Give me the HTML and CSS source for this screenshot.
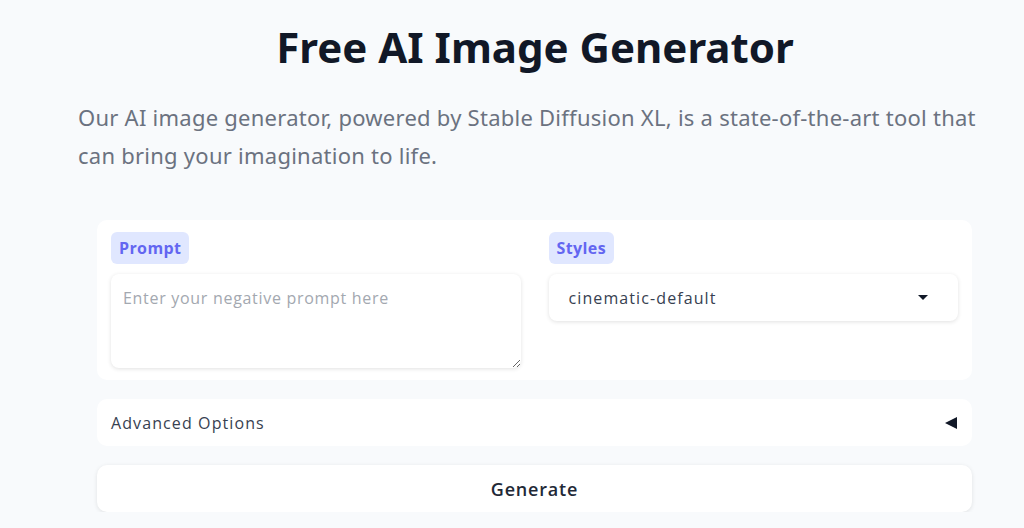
FILE: index.html
```html
<!DOCTYPE html>
<html lang="en">
<head>
  <meta charset="UTF-8" />
  <meta name="viewport" content="width=device-width, initial-scale=1.0"/>
  <title>Free AI Image Generator</title>
  <link rel="stylesheet" href="styles.css">
</head>
<body>
  <div class="container">
    <h1 class="title">Free AI Image Generator</h1>
    <p class="intro">Our AI image generator, powered by Stable Diffusion XL, is a state-of-the-art tool that can bring your imagination to life.</p>

    <div class="form-card">
      <div class="field">
        <span class="badge">Prompt</span>
        <textarea class="prompt-input" placeholder="Enter your negative prompt here"></textarea>
      </div>
      <div class="field">
        <span class="badge">Styles</span>
        <div class="select">
          <span>cinematic-default</span>
          <span class="caret-down"></span>
        </div>
      </div>
    </div>

    <div class="advanced">
      <span>Advanced Options</span>
      <span class="caret-left"></span>
    </div>

    <button class="generate">Generate</button>
  </div>
</body>
</html>
```

FILE: styles.css
```css
body {
  margin: 0;
  background: #f8fafc;
  font-family: "Noto Sans", "Open Sans", sans-serif;
  color: #111827;
}
.container {
  width: 914px;
  margin-left: 78px;
}
.title {
  margin: 0;
  padding-top: 18px;
  font-size: 42px;
  line-height: 58px;
  font-weight: 700;
  text-align: center;
  color: #111827;
}
.intro {
  margin: 22px 0 0;
  font-size: 22px;
  line-height: 38px;
  letter-spacing: 0.25px;
  color: #6b7280;
}
.form-card {
  margin: 46px 20px 0 19px;
  background: #fff;
  border-radius: 10px;
  padding: 12px 14px;
  display: grid;
  grid-template-columns: 1fr 1fr;
  gap: 28px;
  font-family: "Open Sans", sans-serif;
}
.field {
  display: flex;
  flex-direction: column;
  align-items: flex-start;
  gap: 10px;
}
.badge {
  background: #e0e7ff;
  color: #6366f1;
  font-weight: 700;
  font-size: 16px;
  line-height: 32px;
  padding: 0 8px;
  border-radius: 6px;
  letter-spacing: 0.4px;
}
.prompt-input {
  box-sizing: border-box;
  width: 100%;
  height: 94px;
  border: none;
  border-radius: 8px;
  box-shadow: 0 1px 4px rgba(0,0,0,0.12);
  padding: 13px 12px;
  font-family: "Open Sans", sans-serif;
  font-size: 16px;
  letter-spacing: 0.7px;
  outline: none;
  resize: vertical;
}
.prompt-input::placeholder {
  color: #a3a8b0;
}
.select {
  box-sizing: border-box;
  width: 100%;
  height: 47px;
  border-radius: 8px;
  box-shadow: 0 1px 4px rgba(0,0,0,0.12);
  padding: 0 30px 0 20px;
  display: flex;
  align-items: center;
  justify-content: space-between;
  font-size: 16px;
  color: #374151;
  letter-spacing: 1.1px;
}
.caret-down {
  width: 0;
  height: 0;
  border-left: 5px solid transparent;
  border-right: 5px solid transparent;
  border-top: 5px solid #111827;
}
.advanced {
  margin: 19px 20px 0 19px;
  height: 47px;
  background: #fff;
  border-radius: 10px;
  padding: 0 15px 0 14px;
  display: flex;
  align-items: center;
  justify-content: space-between;
  font-family: "Open Sans", sans-serif;
  font-size: 16px;
  color: #374151;
  letter-spacing: 1.1px;
}
.caret-left {
  width: 0;
  height: 0;
  border-top: 6px solid transparent;
  border-bottom: 6px solid transparent;
  border-right: 12px solid #111827;
}
.generate {
  display: block;
  box-sizing: border-box;
  width: 875px;
  margin: 19px 0 0 19px;
  height: 47px;
  background: #fff;
  border: none;
  border-radius: 10px;
  box-shadow: 0 1px 4px rgba(0,0,0,0.1);
  font-family: "Open Sans", sans-serif;
  font-size: 18px;
  font-weight: 600;
  color: #1f2937;
  letter-spacing: 0.8px;
  cursor: pointer;
}
```
